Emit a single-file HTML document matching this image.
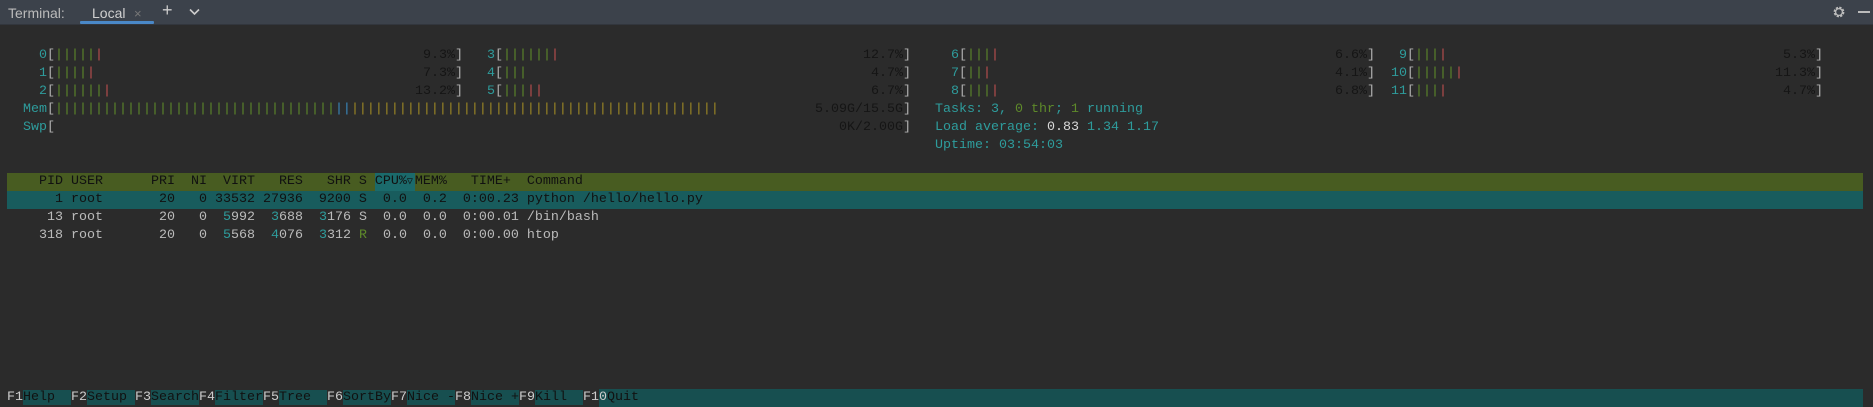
<!DOCTYPE html>
<html><head><meta charset="utf-8"><style>
*{margin:0;padding:0;box-sizing:border-box}
body{width:1873px;height:407px;background:#2b2b2b;overflow:hidden;position:relative;font-family:"Liberation Mono","DejaVu Sans Mono",monospace;font-size:13.33px;line-height:18px;color:#bbbbbb}
.tab{position:absolute;left:0;top:0;width:1873px;height:25px;background:#3c424b;border-bottom:1px solid #32363d;font-family:"Liberation Sans",sans-serif;font-size:14px;color:#bbbbbb}
.tab span{position:absolute;top:4px}
.c{position:absolute;left:0;top:3px;width:1873px;height:404px}
.r{position:absolute;left:7px;white-space:pre;height:18px}
.m{position:absolute;width:440px;height:18px;white-space:pre}
.l{display:inline-block;width:24px;text-align:right;color:#2e9c9c}
.p{position:absolute;right:8px;top:0;color:#151515}
.b{position:absolute;right:0;top:0;color:#b0b0b0}
.g{color:#5e8a2a}.rd{color:#c05050}.bl{color:#3a8ac0}.y{color:#a08a24}.t{color:#2e9c9c}.w{color:#d8d8d8}
.k{color:#cccccc}.f{background:#174f50;color:#111}
</style></head><body>
<div class="tab">
<span style="left:8px">Terminal:</span>
<span style="left:92px;color:#d0d0d0">Local</span>
<span style="left:134px;color:#777;font-size:13px;top:5px">×</span>
<div style="position:absolute;left:80px;top:21px;width:74px;height:3px;background:#4a88c7;border-radius:1px"></div>
<span style="left:162px;font-size:18px;top:1px;color:#ccc">+</span>
<svg style="position:absolute;left:189px;top:8px" width="11" height="8"><path d="M1 1.5 L5.5 6 L10 1.5" stroke="#ccc" stroke-width="1.6" fill="none"/></svg>
<svg style="position:absolute;left:1832px;top:5px" width="14" height="14" viewBox="0 0 14 14"><circle cx="7" cy="7" r="4.3" fill="none" stroke="#bbb" stroke-width="2.2" stroke-dasharray="2.2 1.2"/><circle cx="7" cy="7" r="3.4" fill="none" stroke="#bbb" stroke-width="1.3"/><circle cx="7" cy="7" r="1.3" fill="#3c424b"/></svg>
<div style="position:absolute;left:1858px;top:11px;width:12px;height:2px;background:#bbb"></div>
</div>
<div class="c">
<div class="m" style="left:23px;top:44px"><span class="l">0</span><span class="b" style="position:static">[</span><span class="g">|||||</span><span class="rd">|</span><span class="p">9.3%</span><span class="b">]</span></div>
<div class="m" style="left:471px;top:44px"><span class="l">3</span><span class="b" style="position:static">[</span><span class="g">||||||</span><span class="rd">|</span><span class="p">12.7%</span><span class="b">]</span></div>
<div class="m" style="left:935px;top:44px"><span class="l">6</span><span class="b" style="position:static">[</span><span class="g">|||</span><span class="rd">|</span><span class="p">6.6%</span><span class="b">]</span></div>
<div class="m" style="left:1383px;top:44px"><span class="l">9</span><span class="b" style="position:static">[</span><span class="g">|||</span><span class="rd">|</span><span class="p">5.3%</span><span class="b">]</span></div>
<div class="m" style="left:23px;top:62px"><span class="l">1</span><span class="b" style="position:static">[</span><span class="g">||||</span><span class="rd">|</span><span class="p">7.3%</span><span class="b">]</span></div>
<div class="m" style="left:471px;top:62px"><span class="l">4</span><span class="b" style="position:static">[</span><span class="g">|||</span><span class="p">4.7%</span><span class="b">]</span></div>
<div class="m" style="left:935px;top:62px"><span class="l">7</span><span class="b" style="position:static">[</span><span class="g">||</span><span class="rd">|</span><span class="p">4.1%</span><span class="b">]</span></div>
<div class="m" style="left:1383px;top:62px"><span class="l">10</span><span class="b" style="position:static">[</span><span class="g">|||||</span><span class="rd">|</span><span class="p">11.3%</span><span class="b">]</span></div>
<div class="m" style="left:23px;top:80px"><span class="l">2</span><span class="b" style="position:static">[</span><span class="g">||||||</span><span class="rd">|</span><span class="p">13.2%</span><span class="b">]</span></div>
<div class="m" style="left:471px;top:80px"><span class="l">5</span><span class="b" style="position:static">[</span><span class="g">|||</span><span class="rd">||</span><span class="p">6.7%</span><span class="b">]</span></div>
<div class="m" style="left:935px;top:80px"><span class="l">8</span><span class="b" style="position:static">[</span><span class="g">|||</span><span class="rd">|</span><span class="p">6.8%</span><span class="b">]</span></div>
<div class="m" style="left:1383px;top:80px"><span class="l">11</span><span class="b" style="position:static">[</span><span class="g">|||</span><span class="rd">|</span><span class="p">4.7%</span><span class="b">]</span></div>
<div class="m" style="left:23px;top:98px;width:888px"><span class="l">Mem</span><span class="b" style="position:static">[</span><span class="g">|||||||||||||||||||||||||||||||||||</span><span class="bl">||</span><span class="y">||||||||||||||||||||||||||||||||||||||||||||||</span><span class="p">5.09G/15.5G</span><span class="b">]</span></div>
<div class="m" style="left:23px;top:116px;width:888px"><span class="l">Swp</span><span class="b" style="position:static">[</span><span class="p">0K/2.00G</span><span class="b">]</span></div>
<div class="r t" style="left:935px;top:98px">Tasks: 3, <span class="g">0 thr</span>; <span class="g">1</span> running</div>
<div class="r t" style="left:935px;top:116px">Load average: <span class="w">0.83</span> 1.34 1.17</div>
<div class="r t" style="left:935px;top:134px">Uptime: 03:54:03</div>
<div style="position:absolute;left:7px;top:170px;width:1856px;height:18px;background:#485c21"></div>
<div style="position:absolute;left:375px;top:170px;width:40px;height:18px;background:#1b6a6b"></div>
<div class="r" style="top:170px;color:#111">    PID USER      PRI  NI  VIRT   RES   SHR S CPU%<span style="display:inline-block;width:8px;font-family:'DejaVu Sans Mono',monospace;font-size:10px">▽</span>MEM%   TIME+  Command</div>
<div style="position:absolute;left:7px;top:188px;width:1856px;height:18px;background:#185c5d"></div>
<div class="r" style="top:188px;color:#111">      1 root       20   0 33532 27936  9200 S  0.0  0.2  0:00.23 python /hello/hello.py</div>
<div class="r" style="top:206px">     13 root       20   0  <span class="t">5</span>992  <span class="t">3</span>688  <span class="t">3</span>176 S  0.0  0.0  0:00.01 /bin/bash</div>
<div class="r" style="top:224px">    318 root       20   0  <span class="t">5</span>568  <span class="t">4</span>076  <span class="t">3</span>312 <span class="g">R</span>  0.0  0.0  0:00.00 htop</div>
<div style="position:absolute;left:599px;top:386px;width:1264px;height:18px;background:#174f50"></div>
<div class="r" style="top:386px"><span class="k">F1</span><span class="f">Help  </span><span class="k">F2</span><span class="f">Setup </span><span class="k">F3</span><span class="f">Search</span><span class="k">F4</span><span class="f">Filter</span><span class="k">F5</span><span class="f">Tree  </span><span class="k">F6</span><span class="f">SortBy</span><span class="k">F7</span><span class="f">Nice -</span><span class="k">F8</span><span class="f">Nice +</span><span class="k">F9</span><span class="f">Kill  </span><span class="k">F10</span><span class="f">Quit</span></div>
</div>
</body></html>
